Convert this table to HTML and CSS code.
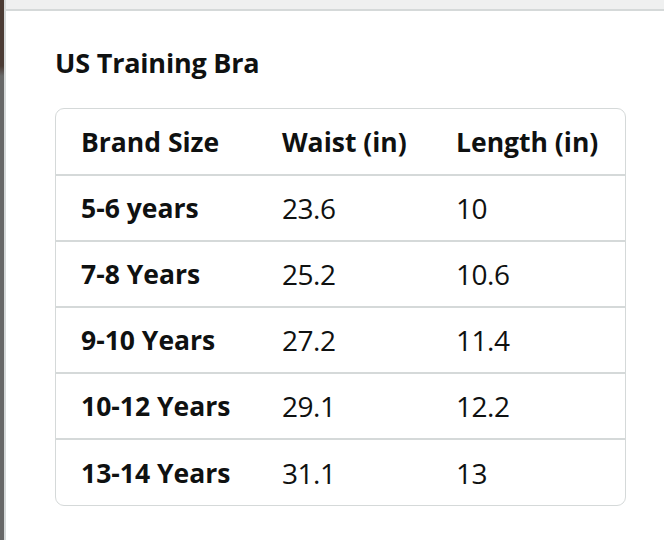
FILE: index.html
```html
<!DOCTYPE html>
<html>
<head>
<meta charset="utf-8">
<link rel="stylesheet" href="styles.css">
</head>
<body>
<div class="page">
  <div class="edge"></div>
  <div class="panel">
    <div class="topbar"></div>
    <div class="content">
      <h2 class="title">US Training Bra</h2>
      <div class="table-wrap">
        <table class="size-table">
          <colgroup>
            <col class="c1"><col class="c2"><col class="c3">
          </colgroup>
          <thead>
            <tr><th>Brand Size</th><th>Waist (in)</th><th>Length (in)</th></tr>
          </thead>
          <tbody>
            <tr><th>5-6 years</th><td>23.6</td><td>10</td></tr>
            <tr><th>7-8 Years</th><td>25.2</td><td>10.6</td></tr>
            <tr><th>9-10 Years</th><td>27.2</td><td>11.4</td></tr>
            <tr><th>10-12 Years</th><td>29.1</td><td>12.2</td></tr>
            <tr><th>13-14 Years</th><td>31.1</td><td>13</td></tr>
          </tbody>
        </table>
      </div>
    </div>
  </div>
</div>
</body>
</html>
```

FILE: styles.css
```css
* { box-sizing: border-box; }
html, body { margin: 0; padding: 0; background: #fff; }
body {
  font-family: "Open Sans", "Liberation Sans", sans-serif;
  color: #0f1111;
}
.page {
  display: flex;
  height: 540px;
  width: 664px;
  overflow: hidden;
}
.edge {
  width: 4px;
  flex: none;
  background: linear-gradient(to bottom, #4b3b34 0, #4b3b34 66px, #676767 76px, #676767 100%);
}
.panel {
  flex: 1;
  border-left: 2px solid #d5d9d9;
  display: flex;
  flex-direction: column;
}
.topbar {
  height: 11px;
  background: #eff0f0;
  border-bottom: 2px solid #d5d9d9;
}
.content {
  padding: 35px 38px 0 49px;
}
.title {
  margin: 0;
  font-size: 27px;
  line-height: 34px;
  font-weight: 700;
  letter-spacing: -0.2px;
}
.table-wrap {
  margin-top: 28px;
  width: 571px;
  border: 1px solid #d5d9d9;
  border-radius: 9px;
  overflow: hidden;
}
.size-table {
  width: 100%;
  border-collapse: collapse;
  table-layout: fixed;
}
.c1 { width: 201px; }
.c2 { width: 174px; }
.c3 { width: auto; }
.size-table th, .size-table td {
  height: 66px;
  padding: 0 0 0 25px;
  text-align: left;
  vertical-align: middle;
  white-space: nowrap;
}
.size-table th { font-size: 26.5px; font-weight: 700; letter-spacing: 0; }
.size-table td { font-size: 28px; font-weight: 400; letter-spacing: -0.5px; }
.size-table tbody tr th, .size-table tbody tr td {
  border-top: 2px solid #d5d9d9;
}
```
